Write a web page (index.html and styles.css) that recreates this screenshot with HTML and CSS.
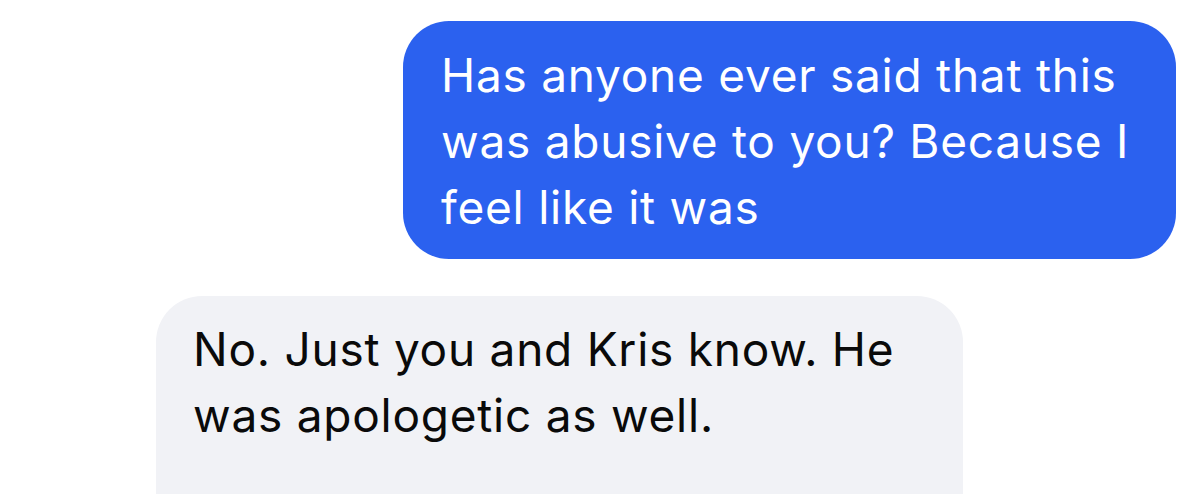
FILE: index.html
```html
<!DOCTYPE html>
<html lang="en">
<head>
    <meta charset="UTF-8">
    <meta name="viewport" content="width=device-width, initial-scale=1.0">
    <title>Messages</title>
    <link rel="stylesheet" href="styles.css">
</head>
<body>
    <div class="thread">
        <div class="bubble sent">
            Has anyone ever said that this was abusive to you? Because I feel like it was
        </div>
        <div class="bubble received">
            No. Just you and Kris know. He was apologetic as well.
        </div>
    </div>
</body>
</html>
```

FILE: styles.css
```css
body{
    margin: 0;
    background-color: #ffffff;
    font-family: Inter, "Liberation Sans", Arial, sans-serif;
    overflow: hidden;
}

.thread{
    display: flex;
    flex-direction: column;
    gap: 37px;
    padding: 21px 24px 0 156px;
}

.bubble{
    font-size: 46px;
    line-height: 66px;
    letter-spacing: 0.75px;
    border-radius: 46px;
    box-sizing: border-box;
}

.sent{
    align-self: flex-end;
    width: 773px;
    padding: 21px 16px 19px 38px;
    background-color: #2b61ef;
    color: #ffffff;
}

.received{
    align-self: flex-start;
    width: 807px;
    min-height: 260px;
    padding: 20px 30px 18px 37px;
    background-color: #f1f2f6;
    color: #0a0a0a;
}
```
